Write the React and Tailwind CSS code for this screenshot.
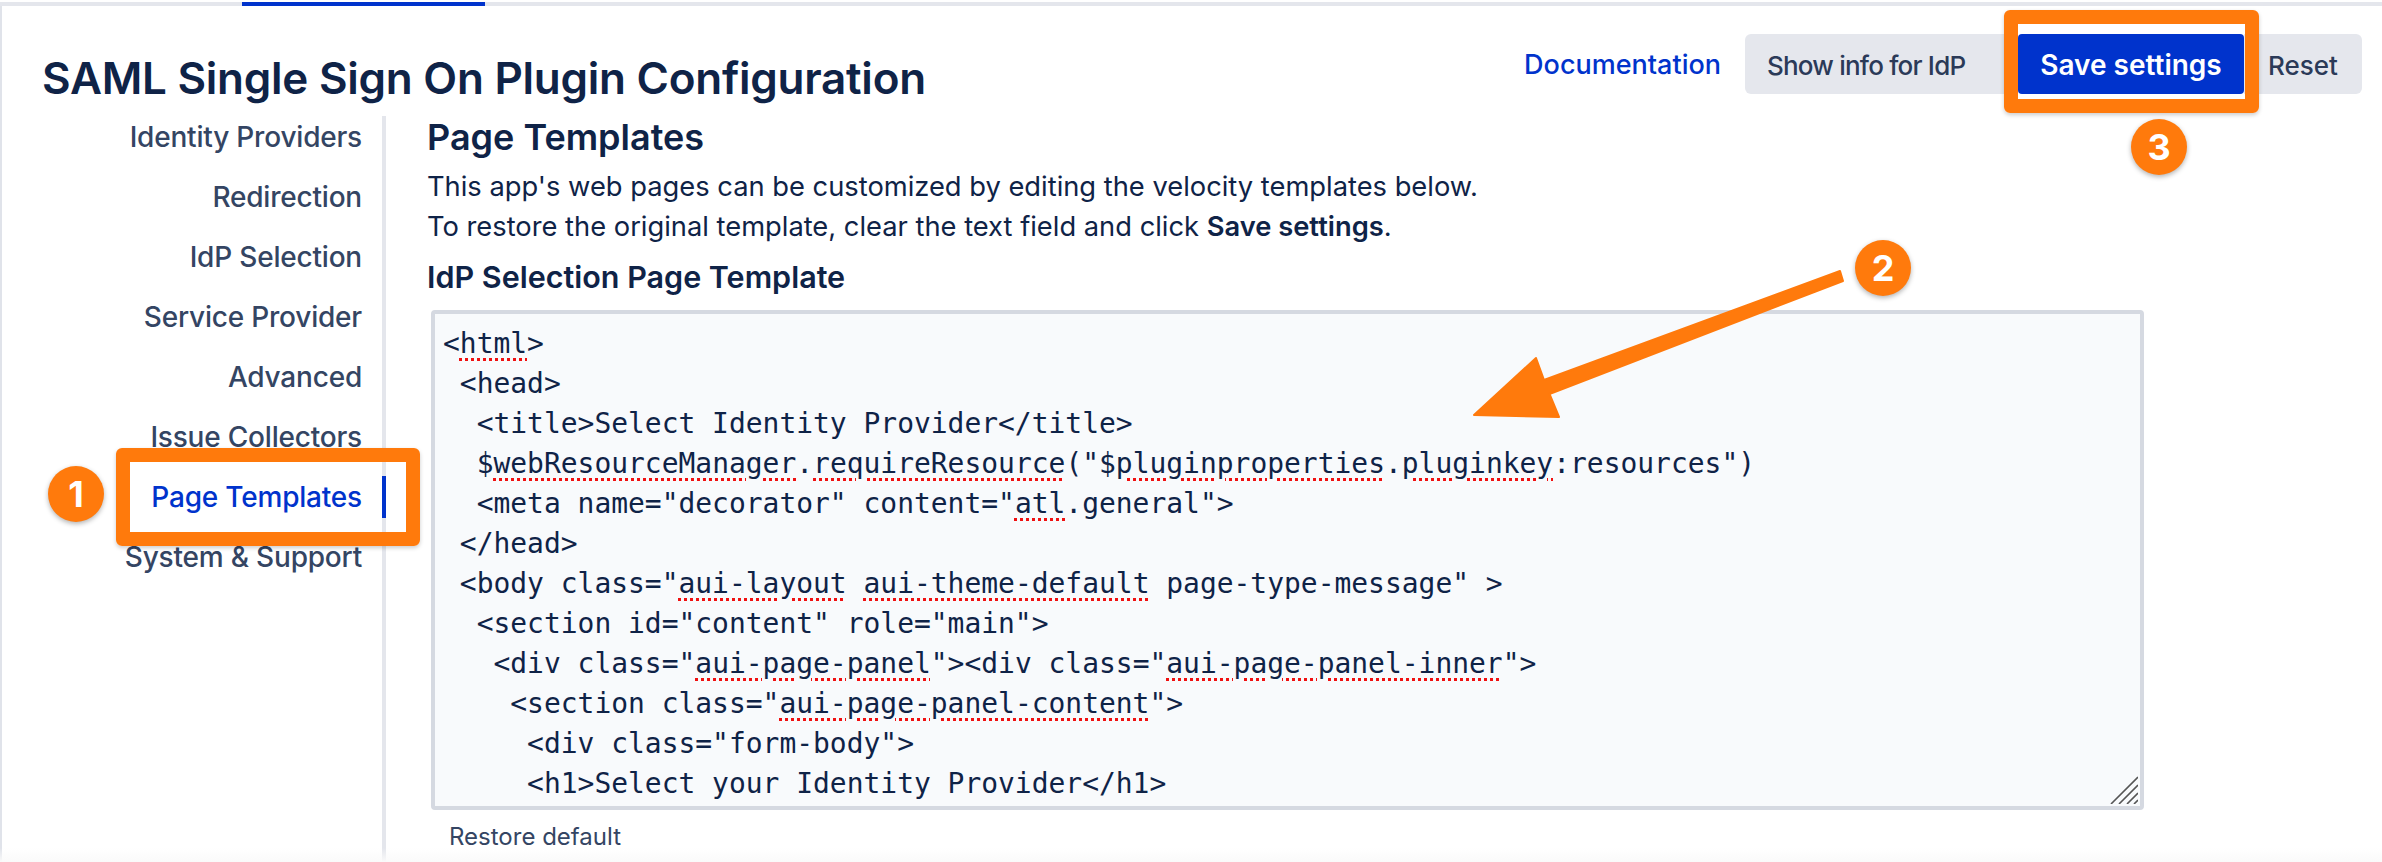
const NAV = [
  "Identity Providers",
  "Redirection",
  "IdP Selection",
  "Service Provider",
  "Advanced",
  "Issue Collectors",
  "Page Templates",
  "System & Support",
];

// wavy spell-check marks from the browser, shown as a dotted red underline
function Sp({ children }) {
  return (
    <span className="underline decoration-dotted decoration-[#f01010] decoration-[3px] underline-offset-[5px]">
      {children}
    </span>
  );
}

function Badge({ n, className }) {
  return (
    <div
      className={`absolute flex h-[56px] w-[56px] items-center justify-center rounded-full bg-[#ff7a0c] text-[36px] font-bold text-white shadow-[0_2px_5px_rgba(0,0,0,0.3)] ${className}`}
    >
      {n}
    </div>
  );
}

function CodeBox() {
  return (
    <div className="relative ml-[4px] h-[500px] w-[1713px] overflow-hidden rounded-[4px] border-[4px] border-[#d5d9e1] bg-[#f8fafc] pl-[8px] pt-[10px] font-['DejaVu_Sans_Mono',monospace] text-[27.95px] leading-[40px] whitespace-pre text-[#0f2347]">
      <div>&lt;<Sp>html</Sp>&gt;</div>
      <div> &lt;head&gt;</div>
      <div>  &lt;title&gt;Select Identity Provider&lt;/title&gt;</div>
      <div>  $<Sp>webResourceManager</Sp>.<Sp>requireResource</Sp>("$<Sp>pluginproperties</Sp>.<Sp>pluginkey</Sp>:resources")</div>
      <div>  &lt;meta name="decorator" content="<Sp>atl</Sp>.general"&gt;</div>
      <div> &lt;/head&gt;</div>
      <div> &lt;body class="<Sp>aui-layout</Sp> <Sp>aui-theme-default</Sp> page-type-message" &gt;</div>
      <div>  &lt;section id="content" role="main"&gt;</div>
      <div>   &lt;div class="<Sp>aui-page-panel</Sp>"&gt;&lt;div class="<Sp>aui-page-panel-inner</Sp>"&gt;</div>
      <div>    &lt;section class="<Sp>aui-page-panel-content</Sp>"&gt;</div>
      <div>     &lt;div class="form-body"&gt;</div>
      <div>     &lt;h1&gt;Select your Identity Provider&lt;/h1&gt;</div>
      <svg className="absolute bottom-[2px] right-[2px] h-[28px] w-[28px]" viewBox="0 0 28 28" stroke="#555" strokeWidth="1.6">
        <path d="M1 28 L28 1 M9 28 L28 9 M17 28 L28 17 M24 28 L28 24" />
      </svg>
    </div>
  );
}

export default function App() {
  return (
    <div className="relative h-[862px] w-[2382px] overflow-hidden bg-white pt-[2px] font-['Inter',sans-serif] text-[#0f2347]">
      {/* top tab strip */}
      <div className="h-[4px] bg-[#e4e6ec] pl-[242px]">
        <div className="h-full w-[243px] bg-[#0033cc]" />
      </div>

      <div className="h-[856px] border-l-2 border-[#e0e3ea]">
        <header className="flex h-[110px] items-start justify-between pl-[40px] pr-[20px]">
          <h1 className="mt-[46px] text-[44px] leading-[52px] font-semibold tracking-[-0.25px]">
            SAML Single Sign On Plugin Configuration
          </h1>
          <div className="mt-[28px] flex h-[60px] items-center text-[26px] font-medium">
            <a className="mr-[24px] pt-[2px] text-[27px] text-[#0033cc]">Documentation</a>
            <button className="h-full w-[273px] rounded-l-[6px] bg-[#e5e7ed] pl-[22px] pt-[2px] text-left tracking-[-0.8px] text-[#2b3a58]">
              Show info for IdP
            </button>
            <button className="h-full w-[226px] rounded-[4px] bg-[#0033cc] pt-[2px] text-center text-[28px] font-semibold text-white">
              Save settings
            </button>
            <button className="h-full w-[118px] rounded-r-[6px] bg-[#e5e7ed] pl-[24px] pt-[2px] text-left text-[#2b3a58]">
              Reset
            </button>
          </div>
        </header>

        <div className="flex h-[746px]">
          <nav className="flex w-[384px] flex-col gap-[18px] border-r-4 border-[#e4e6ec] pr-[20px] text-right text-[28px] font-medium tracking-[-0.2px] text-[#344563]">
            {NAV.map((item) =>
              item === "Page Templates" ? (
                <div key={item} className="-mr-[24px] h-[42px] border-r-4 border-[#0033cc] pr-[20px] leading-[42px] text-[#0033cc]">
                  {item}
                </div>
              ) : (
                <div key={item} className="h-[42px] leading-[42px]">
                  {item}
                </div>
              )
            )}
          </nav>

          <main className="flex-1 pl-[41px]">
            <h2 className="h-[42px] text-[36px] leading-[42px] font-semibold">Page Templates</h2>
            <p className="mt-[9px] text-[27.3px] leading-[40px]">
              This app's web pages can be customized by editing the velocity templates below.
              <br />
              To restore the original template, clear the text field and click{" "}
              <strong className="font-semibold">Save settings</strong>.
            </p>
            <h3 className="mt-[10px] h-[40px] text-[30.5px] leading-[40px] font-semibold">IdP Selection Page Template</h3>
            <div className="mt-[13px]">
              <CodeBox />
            </div>
            <p className="ml-[22px] mt-[12px] text-[24px] leading-[30px] text-[#344563]">Restore default</p>
          </main>
        </div>
      </div>

      {/* annotations */}
      <div className="absolute left-[116px] top-[448px] h-[98px] w-[304px] rounded-[6px] border-[14px] border-[#ff7a0c] shadow-[0_2px_4px_rgba(0,0,0,0.2)]" />
      <div className="absolute left-[2004px] top-[10px] h-[103px] w-[255px] rounded-[6px] border-[14px] border-[#ff7a0c] shadow-[0_2px_4px_rgba(0,0,0,0.2)]" />
      <Badge n="1" className="left-[48px] top-[466px]" />
      <Badge n="2" className="left-[1855px] top-[240px]" />
      <Badge n="3" className="left-[2131px] top-[119px]" />
      <svg className="absolute left-[1470px] top-[265px] h-[160px] w-[380px]" viewBox="1470 265 380 160">
        <path
          d="M1474 415 L1536 358 L1544 380 L1840 271 L1843 281 L1549.5 394 L1559 417 Z"
          fill="#ff7a0c"
          stroke="#ff7a0c"
          strokeWidth="2"
          strokeLinejoin="round"
        />
      </svg>
      <div className="absolute bottom-0 left-0 h-[14px] w-full bg-gradient-to-b from-transparent to-[#fafafa]" />
    </div>
  );
}
